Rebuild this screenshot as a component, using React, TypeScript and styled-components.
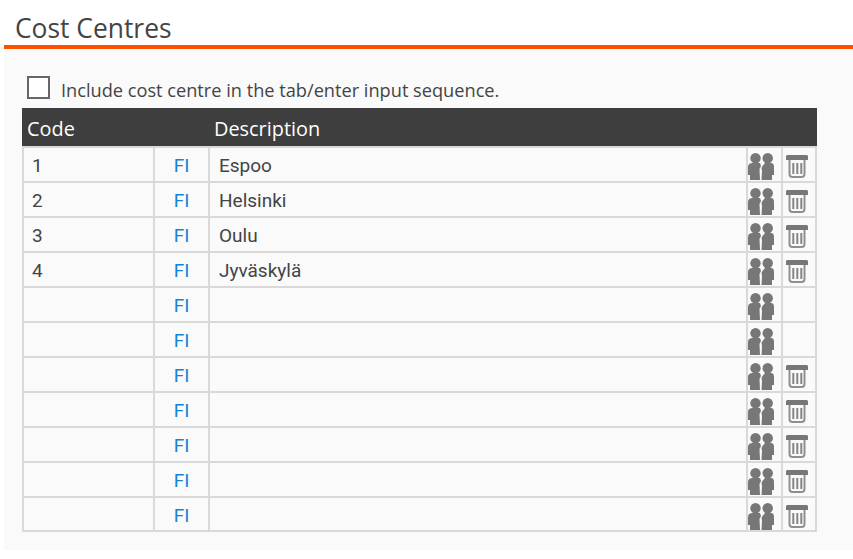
import React from "react";
import styled, { createGlobalStyle } from "styled-components";

const Global = createGlobalStyle`
  html, body { margin: 0; padding: 0; background: #fff; }
  body { font-family: "Open Sans", "Liberation Sans", sans-serif; }
`;

const Page = styled.div`
  width: 853px;
  height: 559px;
  padding: 0 0 0 4px;
  box-sizing: border-box;
  overflow: hidden;
`;

const Title = styled.h1`
  margin: 0;
  height: 45px;
  padding: 11px 0 0 11px;
  box-sizing: border-box;
  font-size: 26.4px;
  line-height: 35px;
  font-weight: 400;
  color: #444;
`;

const Panel = styled.div`
  border-top: 4px solid #ff5000;
  height: 505px;
  box-sizing: border-box;
  background: #fafafa;
  padding: 27px 0 0 18px;
`;

const OptionRow = styled.label`
  display: flex;
  align-items: flex-start;
  height: 24px;
  margin-left: 5px;
  margin-bottom: 8px;
  color: #444;
  font-size: 18.2px;
  line-height: 28px;
`;

const CheckBox = styled.span`
  width: 23px;
  height: 23px;
  box-sizing: border-box;
  border: 2px solid #666;
  background: #fff;
  margin-right: 11px;
`;

const Table = styled.div`
  width: 795px;
`;

const Header = styled.div`
  display: grid;
  grid-template-columns: 133px 55px 538px 35px 34px;
  height: 38px;
  background: #3e3e3e;
  color: #fff;
  font-size: 19.9px;
  line-height: 41px;
`;

const HeadCell = styled.div<{ $inset: number }>`
  padding-left: ${(p) => p.$inset}px;
`;

const Body = styled.div`
  border-top: 2px solid #d9d9d9;
  border-left: 2px solid #d9d9d9;
`;

const Row = styled.div`
  display: grid;
  grid-template-columns: 131px 55px 538px 35px 34px;
  height: 35px;
  box-sizing: border-box;
  border-bottom: 2px solid #d9d9d9;

  &:last-child {
    height: 34px;
  }
`;

const Cell = styled.div`
  display: flex;
  align-items: center;
  min-width: 0;
  border-right: 2px solid #d9d9d9;
  font-family: Roboto, "Liberation Sans", sans-serif;
  font-size: 19px;
  color: #444;
  padding-top: 2px;
`;

const CodeCell = styled(Cell)`
  padding-left: 8px;
`;

const LangCell = styled(Cell)`
  justify-content: center;
  color: #1484d6;
`;

const DescCell = styled(Cell)`
  padding-left: 9px;
`;

const IconCell = styled(Cell)<{ $left: number; $top: number }>`
  align-items: flex-start;
  padding-left: ${(p) => p.$left}px;
  padding-top: ${(p) => p.$top}px;
`;

const PeopleIcon = () => (
  <svg width="26" height="27" viewBox="0 0 26 27" fill="#777">
    <circle cx="7.500" cy="5.200" r="5.200" />
    <circle cx="19.700" cy="5.200" r="5.200" />
    <path d="M5 8h5v2h2l1 3-1.500 3 .5 11H2V22H0V14q0-4 5-4z" />
    <path d="M17 8h5v2h1q3 0 3 4v8h-2v5H13.500L14 18l-.5-3 1-2 2.500-3z" />
  </svg>
);

const TrashIcon = () => (
  <svg width="22" height="23" viewBox="0 0 22 23">
    <path d="M1 0h20l1 1v4H0V1z" fill="#777" />
    <path d="M3.500 5v14q0 3 3 3h9q3 0 3-3V5" fill="none" stroke="#8f8f8f" strokeWidth="2" />
    <path d="M7.300 8v11M11.300 8v11M15.300 8v11" stroke="#858585" strokeWidth="2" fill="none" />
  </svg>
);

const rows: { code: string; desc: string; trash: boolean }[] = [
  { code: "1", desc: "Espoo", trash: true },
  { code: "2", desc: "Helsinki", trash: true },
  { code: "3", desc: "Oulu", trash: true },
  { code: "4", desc: "Jyväskylä", trash: true },
  { code: "", desc: "", trash: false },
  { code: "", desc: "", trash: false },
  { code: "", desc: "", trash: true },
  { code: "", desc: "", trash: true },
  { code: "", desc: "", trash: true },
  { code: "", desc: "", trash: true },
  { code: "", desc: "", trash: true },
];

export default function App() {
  return (
    <Page>
      <Global />
      <Title>Cost Centres</Title>
      <Panel>
        <OptionRow>
          <CheckBox />
          Include cost centre in the tab/enter input sequence.
        </OptionRow>
        <Table>
          <Header>
            <HeadCell $inset={5}>Code</HeadCell>
            <HeadCell $inset={0} />
            <HeadCell $inset={4}>Description</HeadCell>
          </Header>
          <Body>
            {rows.map((r, i) => (
              <Row key={i}>
                <CodeCell>{r.code}</CodeCell>
                <LangCell>FI</LangCell>
                <DescCell>{r.desc}</DescCell>
                <IconCell $left={0} $top={5}><PeopleIcon /></IconCell>
                <IconCell $left={3} $top={7}>{r.trash && <TrashIcon />}</IconCell>
              </Row>
            ))}
          </Body>
        </Table>
      </Panel>
    </Page>
  );
}
